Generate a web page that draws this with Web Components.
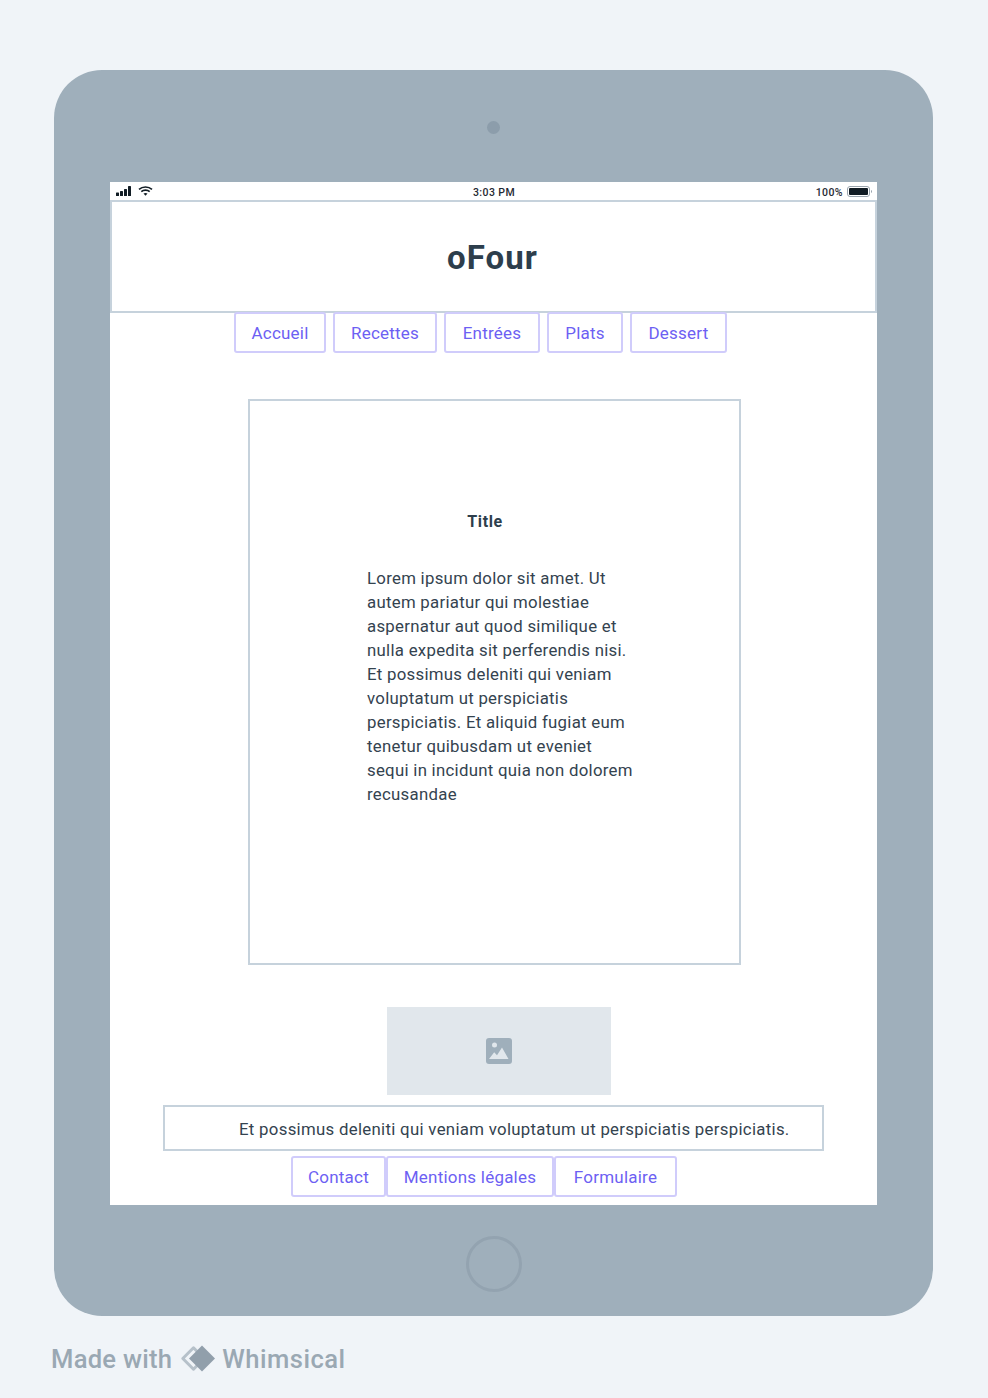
<!DOCTYPE html>
<html><head><meta charset="utf-8"><title>oFour</title>
<style>
html,body{margin:0;padding:0;background:#f0f4f8;}
body{width:988px;height:1398px;overflow:hidden;font-family:Roboto,"Liberation Sans",sans-serif;color:#2b3a45;}
</style></head><body>
<wm-page></wm-page>
<template id="t-page"><style>
:host{display:flex;flex-direction:column;width:988px;height:1398px;padding:70px 0 0 51px;box-sizing:border-box}
</style><tablet-frame>
<status-bar></status-bar>
<app-header>oFour</app-header>
<nav-row style="--ml:124px;--gap:7px">
<nav-btn w="92">Accueil</nav-btn><nav-btn w="104">Recettes</nav-btn><nav-btn w="96">Entrées</nav-btn><nav-btn w="76">Plats</nav-btn><nav-btn w="97">Dessert</nav-btn>
</nav-row>
<article-card><span slot="title">Title</span>Lorem ipsum dolor sit amet. Ut<br>autem pariatur qui molestiae<br>aspernatur aut quod similique et<br>nulla expedita sit perferendis nisi.<br>Et possimus deleniti qui veniam<br>voluptatum ut perspiciatis<br>perspiciatis. Et aliquid fugiat eum<br>tenetur quibusdam ut eveniet<br>sequi in incidunt quia non dolorem<br>recusandae</article-card>
<image-ph></image-ph>
<text-box>Et possimus deleniti qui veniam voluptatum ut perspiciatis perspiciatis.</text-box>
<nav-row style="--ml:181px;--gap:0px;--mt:6px">
<nav-btn w="95">Contact</nav-btn><nav-btn w="168">Mentions légales</nav-btn><nav-btn w="123">Formulaire</nav-btn>
</nav-row>
</tablet-frame><made-with></made-with></template>

<template id="t-frame"><style>
:host{display:flex;flex-direction:column;align-items:center;width:879px;height:1246px;margin-left:3px;background:#9fafbb;border-radius:48px;box-sizing:border-box;padding-top:51px}
.cam{width:13px;height:13px;border-radius:50%;background:#8c9dab;flex:none}
.screen{width:767px;height:1023px;margin-top:48px;background:#fff;display:flex;flex-direction:column;overflow:hidden;flex:none}
.home{width:50px;height:50px;border:3px solid #93a3b0;border-radius:50%;margin-top:31px;flex:none}
</style><div class="cam"></div><div class="screen"><slot></slot></div><div class="home"></div></template>

<template id="t-status"><style>
:host{display:flex;align-items:center;justify-content:space-between;height:18px;padding:0 5px 0 6px;font:500 10.5px/21px Roboto,sans-serif;color:#1f2a33;position:relative;letter-spacing:.4px;flex:none}
.l,.r{display:flex;align-items:center;gap:4px}
.r span{position:relative;top:1px}
.c{position:absolute;left:363px;top:0}
</style><div class="l"><svg width="15" height="10" viewBox="0 0 15 10"><g fill="#111c24"><rect x="0" y="6.500" width="3" height="3.500" rx=".6"/><rect x="4" y="5" width="3" height="5" rx=".6"/><rect x="8" y="3" width="3" height="7" rx=".6"/><rect x="12" y="0" width="3" height="10" rx=".6"/></g></svg>
<svg style="margin-left:3px" width="15" height="10" viewBox="0 0 15 10"><g fill="none" stroke="#111c24" stroke-width="1.6"><path d="M1 3.4C4.6 .2 10.400 .2 14 3.4"/><path d="M3.3 5.6C5.6 3.6 9.400 3.6 11.700 5.6"/></g><path d="M5.500 7.600C6.600 6.700 8.400 6.700 9.500 7.600L7.500 9.800Z" fill="#111c24"/></svg></div>
<div class="c">3:03 PM</div>
<div class="r"><span>100%</span><svg width="25" height="11" viewBox="0 0 25 11"><rect x=".5" y=".5" width="22" height="10" rx="2.5" fill="none" stroke="#9aa5ae"/><rect x="2" y="2" width="19" height="7" rx="1" fill="#111c24"/><path d="M24 4v3c.6-.2 1-.8 1-1.500S24.600 4.200 24 4z" fill="#9aa5ae"/></svg></div></template>

<template id="t-header"><style>
:host{display:flex;align-items:center;justify-content:center;height:113px;box-sizing:border-box;border:2px solid #c6d2dc;font:700 33px Roboto,sans-serif;letter-spacing:1.100px;color:#2d3e4c;padding:2px 2px 0 0;flex:none}
</style><slot></slot></template>

<template id="t-nav"><style>
:host{display:flex;gap:var(--gap);margin-left:var(--ml);margin-top:calc(var(--mt,0px) - 1px);flex:none}
</style><slot></slot></template>

<template id="t-btn"><style>
:host{display:flex;align-items:center;justify-content:center;box-sizing:border-box;height:41px;border:2px solid #d0ccfb;border-radius:3px;color:#6d5ff3;font:400 17px Roboto,sans-serif;background:#fff;letter-spacing:.22px;padding-top:1px}
</style><slot></slot></template>

<template id="t-card"><style>
:host{display:block;box-sizing:border-box;width:493px;height:566px;margin:46px 0 0 138px;border:2px solid #c6d2dc;padding:111px 0 0 117px;font:400 16.800px/24px Roboto,sans-serif;letter-spacing:.28px;color:#34434f;flex:none}
.t{font-weight:700;font-size:16px;letter-spacing:.6px;color:#2d3e4c;line-height:20px;margin-bottom:34px;width:236px;text-align:center}
</style><div class="t"><slot name="title"></slot></div><slot></slot></template>

<template id="t-img"><style>
:host{display:flex;align-items:center;justify-content:center;width:224px;height:88px;margin:42px 0 0 277px;background:#e1e7ec;flex:none}
</style><svg width="26" height="26" viewBox="0 0 26 26"><rect width="26" height="26" rx="3" fill="#9fafbb"/><circle cx="8.500" cy="7" r="2.500" fill="#e1e7ec"/><path d="M3 21l5.200-6.800 2.800 3 5-7.700 6.500 11.500z" fill="#e1e7ec"/></svg></template>

<template id="t-text"><style>
:host{display:flex;align-items:center;box-sizing:border-box;width:661px;height:46px;margin:10px 0 0 53px;border:2px solid #c6d2dc;padding:2px 0 0 74px;font:400 16.800px Roboto,sans-serif;letter-spacing:.3px;color:#34434f;flex:none;white-space:nowrap}
</style><slot></slot></template>

<template id="t-made"><style>
:host{display:flex;align-items:center;gap:7px;margin-top:26px;font:500 25.600px/34px Roboto,sans-serif;color:#9aa8b3;letter-spacing:.25px}
svg{margin-right:-1px}
.w{letter-spacing:.5px}
</style><span>Made with</span><svg width="37" height="28" viewBox="0 0 37 28"><path d="M14.500 2.800 3.800 13.500 14.500 24.200 25 13.500z" fill="none" stroke="#b6c1ca" stroke-width="3" stroke-linejoin="round"/><path d="M23 .5 36 13.500 23 26.500 10 13.500z" fill="#919fab"/></svg><span class="w">Whimsical</span></template>

<script>
const reg=(n,id)=>customElements.define(n,class extends HTMLElement{constructor(){super();this.attachShadow({mode:'open'}).appendChild(document.getElementById(id).content.cloneNode(true));}connectedCallback(){const w=this.getAttribute('w');if(w)this.style.width=w+'px';}});
reg('wm-page','t-page');reg('tablet-frame','t-frame');reg('status-bar','t-status');reg('app-header','t-header');reg('nav-row','t-nav');reg('nav-btn','t-btn');reg('article-card','t-card');reg('image-ph','t-img');reg('text-box','t-text');reg('made-with','t-made');
</script>
</body></html>
